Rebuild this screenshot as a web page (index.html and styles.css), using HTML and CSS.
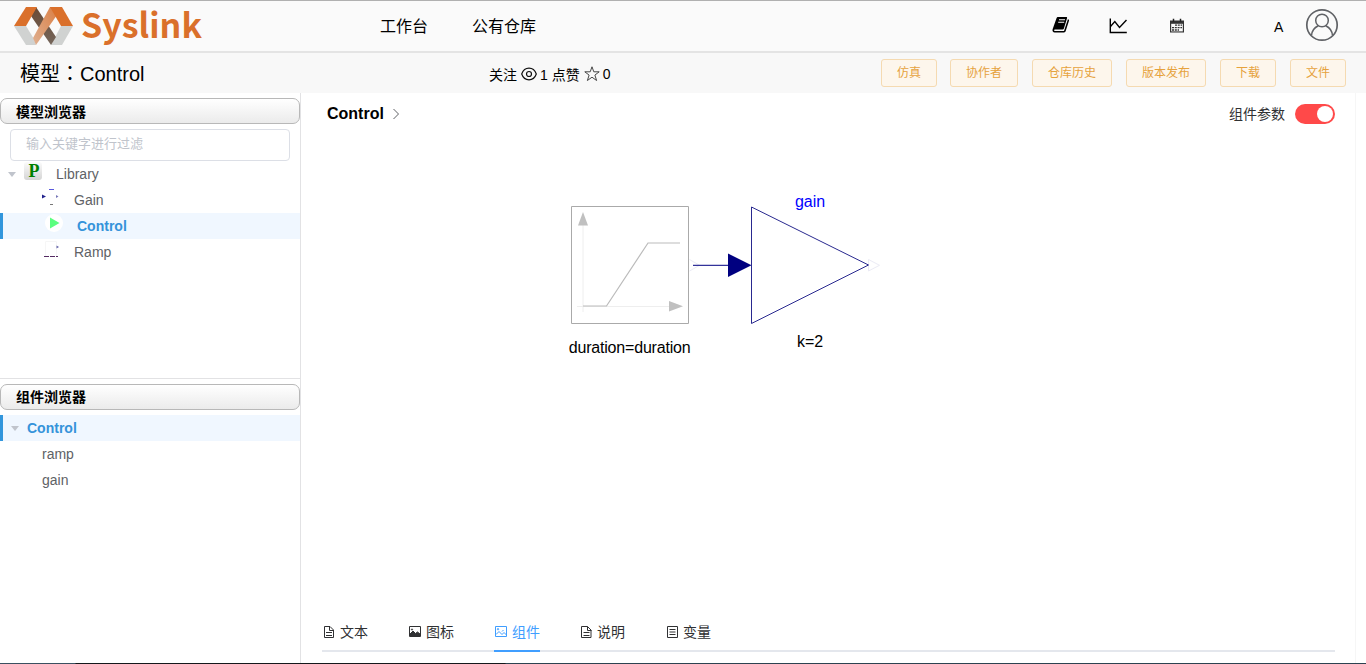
FILE: index.html
```html
<!DOCTYPE html>
<html lang="zh">
<head>
<meta charset="utf-8">
<title>Syslink</title>
<link rel="stylesheet" href="styles.css">
</head>
<body>
<div class="app">
  <header class="top">
    <div class="brand">
      <svg class="brand-mark" width="60" height="40" viewBox="0 0 60 40">
        <defs>
          <linearGradient id="dark" x1="0" y1="0" x2="0" y2="1"><stop offset="0" stop-color="#694a35"/><stop offset="1" stop-color="#75665b"/></linearGradient>
          <linearGradient id="light" x1="1" y1="0" x2="0" y2="1"><stop offset="0" stop-color="#db7f44"/><stop offset="1" stop-color="#dfb091"/></linearGradient>
        </defs>
        <path fill="#d0d2d1" d="M0 20h12l8 13 2 6H12z"/>
        <path fill="#d0d2d1" d="M47 20h12L48 39H37z"/>
        <path fill="url(#dark)" d="M22 1l20 30-5 8L17 10z"/>
        <path fill="url(#light)" d="M36 1h6l1 8L22 39l-3-7z"/>
        <path fill="#da702b" d="M12 1h11l-11 19H0z"/>
        <path fill="#da702b" d="M36 1h12l11 19H47z"/>
      </svg>
      <span class="brand-name">Syslink</span>
    </div>
    <nav class="nav"><a>工作台</a><a>公有仓库</a></nav>
    <div class="tools">
      <svg width="18" height="18" viewBox="0 0 18 18"><path d="M6.200 1h8c.7 0 1.100.5.900 1.100l-3.200 10.400c-.2.600-.7.900-1.300.9H3c-1.300 0-1.300 1.600 0 1.600h9l3.900-11.800c1.200.3 1.300 1 1 1.900l-3.200 10c-.2.800-.8 1.400-1.700 1.400H2.800C1 16.500.1 15 .6 13.300L4.500 2.200C4.800 1.400 5.300 1 6.200 1z"/><path d="M7 3.800h6M6.200 6.200h6" stroke="#fafafa" stroke-width="1.100"/></svg>
      <svg width="18" height="18" viewBox="0 0 18 18"><path d="M1.300 1.500v14h16.500M1.500 9.500l4.300-5 4.700 6L17.500 3" fill="none" stroke="#000" stroke-width="1.400"/></svg>
      <svg width="16" height="16" viewBox="0 0 16 16"><path d="M1 2.500h14v12H1z" fill="#333"/><path d="M4.500 .8v3M11.500 .8v3" stroke="#222" stroke-width="1.500"/><path d="M2.200 5.800h11.600v7.600H2.200z" fill="#fafafa"/><path d="M6 7.200h7M3 9.600h10M3 12h7" stroke="#333" stroke-width="1.300" stroke-dasharray="2 .8"/></svg>
      <span class="user">A</span>
      <svg class="avatar" width="34" height="34" viewBox="0 0 34 34" fill="none" stroke="#606266"><circle cx="17" cy="17" r="15.200" stroke-width="1.700"/><circle cx="17" cy="12.500" r="6.300" stroke-width="1.500"/><path d="M6.500 27.500c.3-4.500 3-8 6.800-9.800M27.500 27.500c-.3-4.500-3-8-6.800-9.800" stroke-width="1.500"/></svg>
    </div>
  </header>

  <section class="subhead">
    <h1>模型<span class="colon" lang="zh-Hant">：</span>Control</h1>
    <div class="stats">
      <span>关注</span>
      <svg width="16" height="14" viewBox="0 0 16 14" fill="none" stroke="#111" stroke-width="1.200"><path d="M.7 7C3.500-.8 12.500-.8 15.300 7 12.500 14.800 3.500 14.800.7 7z"/><circle cx="8" cy="7" r="2.500"/></svg>
      <span>1 点赞</span>
      <svg width="16" height="16" viewBox="0 0 16 16" fill="none" stroke="#333" stroke-width=".9"><path d="M8 .8l1.800 5h5.400l-4.300 3.300 1.700 5.400L8 11.200l-4.600 3.300 1.700-5.400L.8 5.800h5.400z"/></svg>
      <span>0</span>
    </div>
    <div class="actions"><button>仿真</button><button>协作者</button><button>仓库历史</button><button>版本发布</button><button>下载</button><button>文件</button></div>
  </section>

  <div class="body">
    <aside class="side">
      <section class="models">
        <h2 class="bar">模型浏览器</h2>
        <input class="filter" placeholder="输入关键字进行过滤">
        <div class="row root"><i class="caret"></i><span class="pkg">P</span><span>Library</span></div>
        <div class="row child">
          <svg width="18" height="18" viewBox="0 0 18 18"><path d="M0 6.500l4 2-4 2z" fill="#22228c"/><path d="M14 7l2.500 1.500L14 10z" fill="#7777b8"/><path d="M7 1.500h5" stroke="#5858dd"/><path d="M8 16.500h3" stroke="#777"/></svg>
          <span>Gain</span></div>
        <div class="row current nested">
          <svg width="18" height="18" viewBox="0 0 18 18"><circle cx="9" cy="9" r="9" fill="#fff"/><path d="M5 3.500l9.500 5.500L5 14.500z" fill="#5bff7f"/></svg>
          <span>Control</span></div>
        <div class="row child ramp">
          <svg width="18" height="18" viewBox="0 0 18 18"><path d="M3.500 16V1.500h11V16" fill="none" stroke="#f6f6f6"/><path d="M2 16.500h14" stroke="#542a62" stroke-dasharray="5 1"/><path d="M14.500 5.500L17 7l-2.500 1.500z" fill="#6666aa"/></svg>
          <span>Ramp</span></div>
      </section>
      <section class="parts">
        <h2 class="bar">组件浏览器</h2>
        <div class="row current"><i class="caret"></i><span>Control</span></div>
        <div class="row leaf">ramp</div>
        <div class="row leaf">gain</div>
      </section>
    </aside>

    <main class="main">
      <div class="crumbs">
        <strong>Control</strong>
        <svg width="8" height="12" viewBox="0 0 8 12"><path d="M1.500 1l5 5-5 5" fill="none" stroke="#606266" stroke-width="1"/></svg>
        <label>组件参数<span class="switch"></span></label>
      </div>
      <svg class="diagram" width="1013" height="478" viewBox="322 134 1013 478">
        <path d="M571.500 206.500h117v117h-117z" fill="none" stroke="#aaa"/>
        <path d="M583 225v87M577 306.500h92" stroke="#eee"/>
        <path d="M583 212l5 13.500h-10zM669 301v10.500l14-5.300z" fill="#c0c0c0"/>
        <path d="M583 306h23.500L648 243h32" fill="none" stroke="#bbb" stroke-width="1.200"/>
        <path d="M689.500 259.500l10 5.800-10 5.700M868.500 259.500l11 5.800-11 5.700z" fill="none" stroke="#ebebf5"/>
        <path d="M693 265.300h36" stroke="#33339a" stroke-width="1.200"/>
        <path d="M728 253.500v23.500l23.500-11.800z" fill="#000080"/>
        <path d="M751.500 207v116.500L868.500 265z" fill="none" stroke="#29298f"/>
        <text x="810" y="207" class="name">gain</text>
        <text x="810" y="347">k=2</text>
        <text x="629.700" y="353" textLength="122">duration=duration</text>
      </svg>
      <nav class="tabs">
        <a><svg class="ti" viewBox="0 0 14 14"><path d="M2.500 1.500h5.500l3.500 3.500v7.500h-9zM7.500 1.500v4h4M4 7.500h6M4 10.500h6"/></svg>文本</a>
        <a><svg class="ti" viewBox="0 0 14 14"><path d="M1.500 1.500h11v10h-11z"/><path d="M2 11V9l3-3 2.500 2.500L9.500 7l2.500 2v2z" fill="#303133"/><circle cx="4" cy="4.500" r=".6"/></svg>图标</a>
        <a class="on"><svg class="ti" viewBox="0 0 14 14"><path d="M1.500 2.500h11v10h-11zM2 10.500l3-3 3 3 2-2 2.500 2.500M8 7.500L9.500 6"/><circle cx="4" cy="5.200" r=".7"/></svg><span>组件</span></a>
        <a><svg class="ti" viewBox="0 0 14 14"><path d="M1.500 1.500h6l3.500 3.500v7.500h-9.500zM7.500 1.500v4h4M3.500 7.500h6M3.500 10.500h6"/></svg><span class="near">说明</span></a>
        <a><svg class="ti" viewBox="0 0 14 14"><path d="M1.500 1.500h10v11h-10zM3.500 4.500h6M3.500 7h6M3.500 9.500h6"/></svg><span class="near">变量</span></a>
      </nav>
    </main>
  </div>
  <footer class="foot"></footer>
</div>
</body>
</html>
```
FILE: styles.css
```css
* { box-sizing: border-box; }
body { margin: 0; font: 14px "Liberation Sans", "Noto Sans CJK SC", sans-serif; color: #000; background: #fff; }
svg { display: block; flex: none; }
h1, h2 { margin: 0; }
.app { display: flex; flex-direction: column; width: 1366px; height: 664px; overflow: hidden; }

.top { display: flex; flex: none; height: 53px; background: #fafafa; border-top: 1px solid #b0b0b0; border-bottom: 2px solid #e4e4e4; }
.brand { display: flex; width: 380px; padding: 5px 0 0 14px; }
.brand-name { margin-left: 7px; font: 700 34px/35px "Noto Sans CJK SC", sans-serif; color: #da702b; }
.nav { display: flex; gap: 44px; width: 671px; font-size: 16px; line-height: 51px; }
.tools { display: flex; align-items: center; height: 49px; }
.tools svg:nth-child(1) { margin: -2px 0 0 1px; }
.tools svg:nth-child(2) { margin-left: 39px; }
.tools svg:nth-child(3) { margin-left: 42px; }
.user { margin: 2px 0 0 89px; width: 10px; }
.tools .avatar { margin: -2px 0 0 21px; }

.subhead { display: flex; flex: none; align-items: flex-start; height: 40px; background: #f8f8f8; }
.subhead h1 { width: 488px; padding-left: 20px; font-size: 20px; font-weight: 400; line-height: 43px; }
.colon { font-family: "Noto Sans CJK TC", sans-serif; line-height: 1; }
.stats { display: flex; align-items: center; gap: 4px; width: 393px; height: 42px; padding-left: 1px; }
.stats svg + span { margin-left: -1px; }
.actions { display: flex; gap: 14px; padding-top: 6px; }
.actions button { height: 28px; padding: 0 15px; border: 1px solid #f5dab1; border-radius: 3px; background: #fdf6ec; color: #e6a23c; font: 12px/26px "Liberation Sans", "Noto Sans CJK SC", sans-serif; white-space: nowrap; }
.actions button:first-child { margin-right: -1px; }

.body { display: flex; flex: 1; min-height: 0; }
.side { width: 301px; border-right: 1px solid #e2e2e4; }
.models { height: 286px; padding-top: 5px; border-bottom: 1px solid #e2e2e4; }
.parts { padding-top: 5px; }
.bar { height: 26px; padding-left: 15px; border: 1px solid #b8b8b8; border-radius: 7px; background: linear-gradient(#fff, #ebebeb); font-size: 14px; line-height: 25px; }
.models .bar { line-height: 26px; }
.filter { display: block; width: 280px; height: 32px; margin: 5px 0 0 10px; padding: 0 15px 3px; border: 1px solid #dcdfe6; border-radius: 4px; font: 13px "Liberation Sans", "Noto Sans CJK SC", sans-serif; }
.filter::placeholder { color: #c0c4cc; }
.row { display: flex; height: 26px; line-height: 26px; color: #606266; }
.caret { width: 0; height: 0; margin: 11px 1px 0 8px; border: 4px solid transparent; border-top: 5px solid #c0c4cc; border-bottom: 0; }
.pkg { width: 18px; height: 18px; margin: 1px 14px 0 7px; border-radius: 3px; background: linear-gradient(#fbfbfb, #d5d5d5); color: #008000; font: 700 18px/18px "Liberation Serif", serif; text-align: center; padding-left: 2px; }
.child { padding-left: 42px; }
.child svg { margin: 1px 14px 0 0; }
.ramp svg { margin-top: 1px; }
.current { background: #f0f7ff; border-left: 3px solid #3296dc; color: #3593da; font-weight: 700; }
.nested svg { margin: 1px 14px 0 42px; }
.parts .bar + .row { margin-top: 5px; }
.parts .caret { margin-right: 8px; }
.leaf { padding-left: 42px; }

.main { display: flex; flex-direction: column; width: 1055px; padding: 0 20px 11px 21px; border-right: 1px solid #f6f6f6; }
.crumbs { display: flex; align-items: center; height: 41px; padding-left: 5px; }
.crumbs strong { width: 65px; font-size: 16px; }
.crumbs label { display: flex; align-items: center; gap: 10px; margin-left: auto; color: #303133; line-height: 20px; }
.switch { width: 40px; height: 20px; padding: 2px; border-radius: 10px; background: #ff4949; }
.switch::after { content: ""; display: block; width: 16px; height: 16px; margin-left: auto; border-radius: 50%; background: #fff; }
.diagram text { font: 16px "Liberation Sans", sans-serif; text-anchor: middle; }
.diagram .name { fill: #00f; }
.tabs { display: flex; gap: 40px; height: 40px; border-bottom: 2px solid #e4e7ed; line-height: 40px; color: #303133; }
.tabs a { display: flex; align-items: center; gap: 4px; width: 46px; height: 40px; white-space: nowrap; }
.tabs .on { color: #409eff; border-bottom: 2px solid #409eff; }
.tabs .on span { padding-top: 2px; }
.tabs .near { margin-left: -1px; }
.ti { width: 14px; height: 14px; fill: none; stroke: currentColor; stroke-width: 1; }
.foot { flex: none; height: 1px; background: linear-gradient(90deg, #3a5060 75px, #14181b 76px 505px, #2c4250 506px); }
```
